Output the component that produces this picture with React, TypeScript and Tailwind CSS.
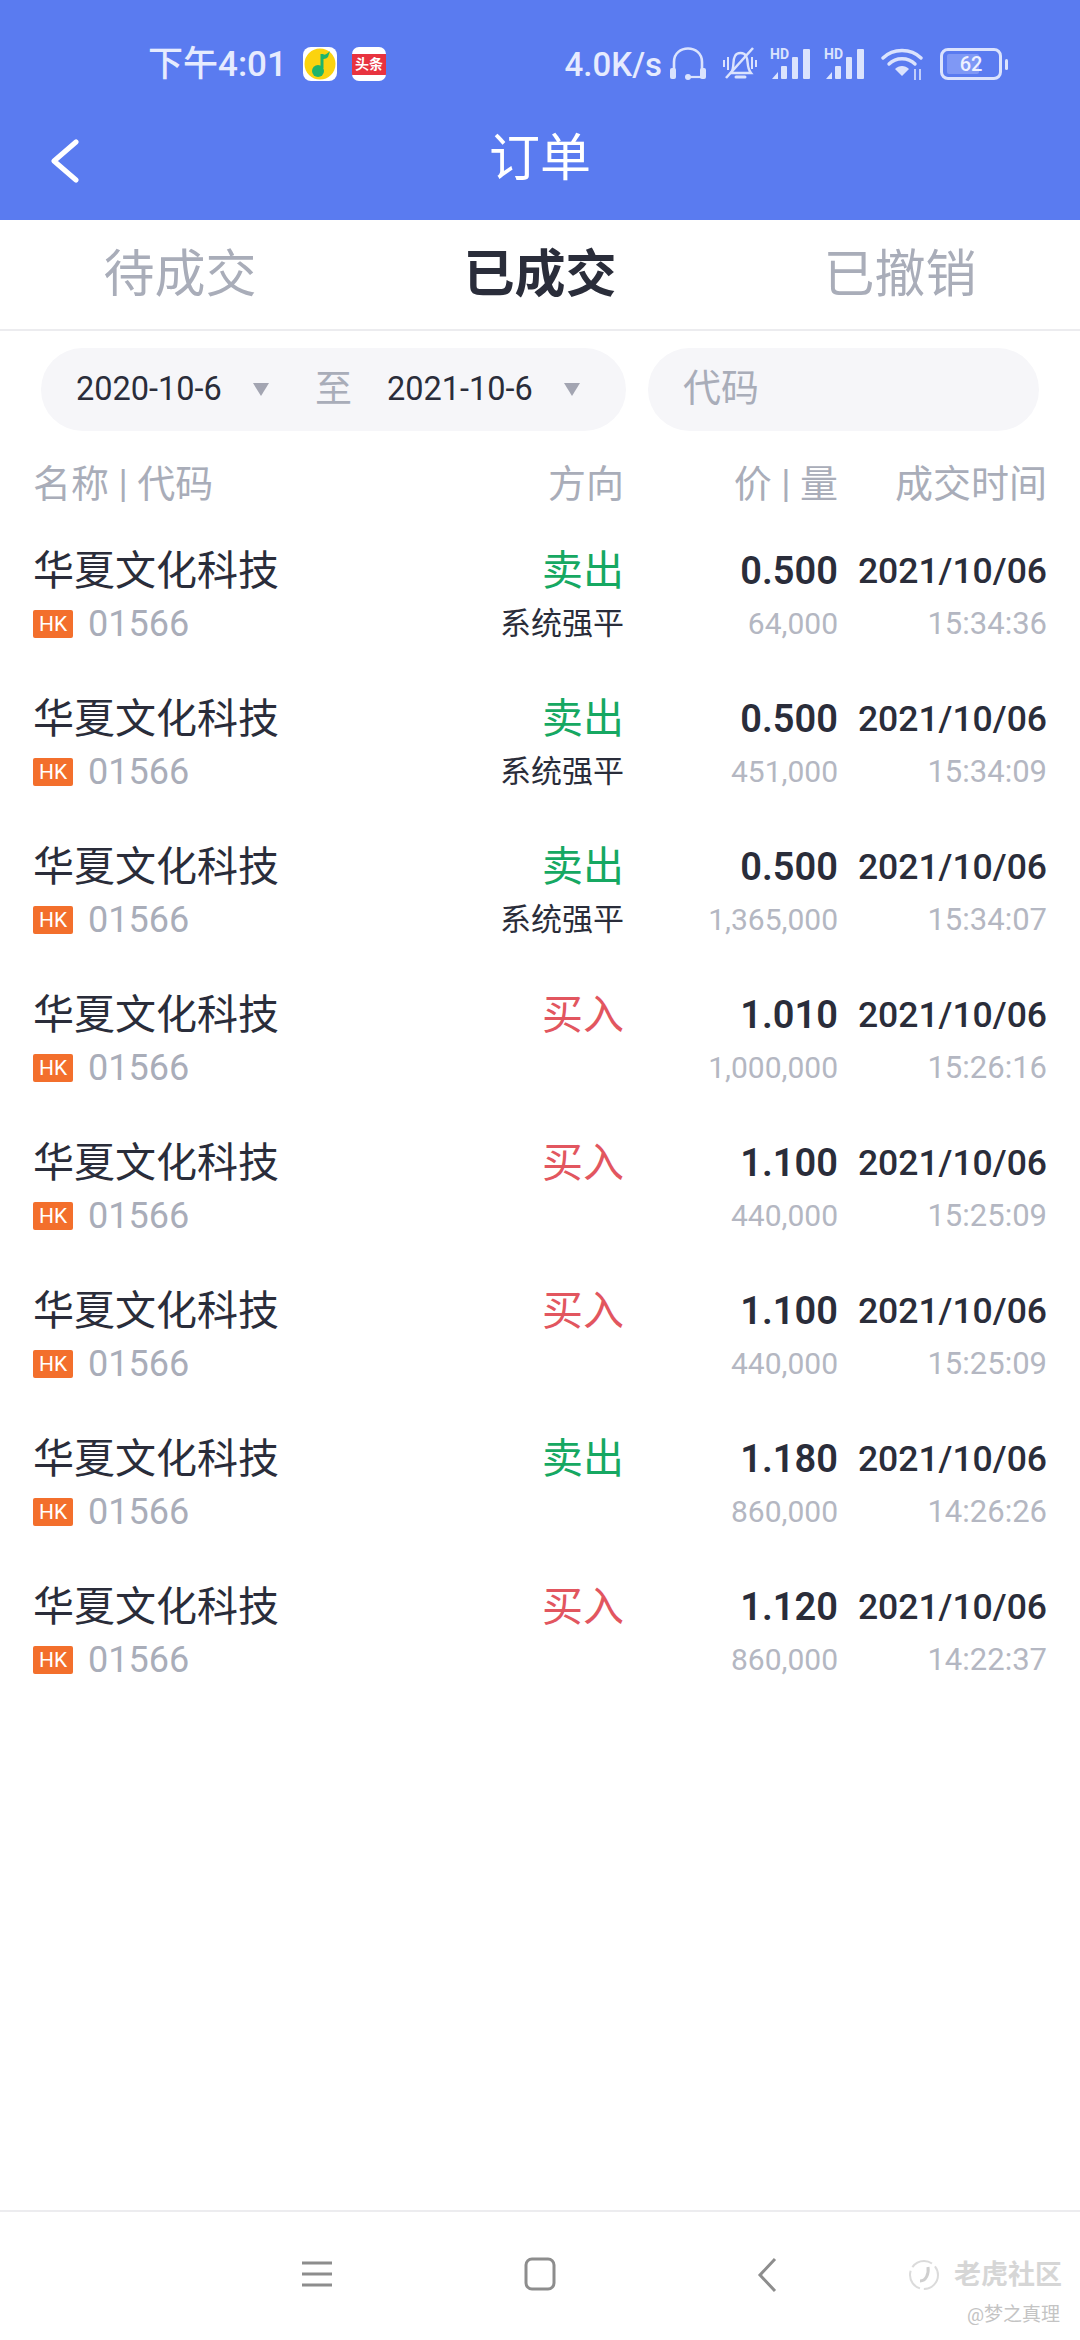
const CJK = "font-['Roboto','Noto_Sans_CJK_SC',sans-serif]";

type Order = {
  side: "卖出" | "买入";
  note?: string;
  price: string;
  qty: string;
  time: string;
};

const orders: Order[] = [
  { side: "卖出", note: "系统强平", price: "0.500", qty: "64,000", time: "15:34:36" },
  { side: "卖出", note: "系统强平", price: "0.500", qty: "451,000", time: "15:34:09" },
  { side: "卖出", note: "系统强平", price: "0.500", qty: "1,365,000", time: "15:34:07" },
  { side: "买入", price: "1.010", qty: "1,000,000", time: "15:26:16" },
  { side: "买入", price: "1.100", qty: "440,000", time: "15:25:09" },
  { side: "买入", price: "1.100", qty: "440,000", time: "15:25:09" },
  { side: "卖出", price: "1.180", qty: "860,000", time: "14:26:26" },
  { side: "买入", price: "1.120", qty: "860,000", time: "14:22:37" },
];

function AppIcons() {
  return (
    <div className="flex items-center gap-[15px]">
      <svg width="34" height="34" viewBox="0 0 34 34">
        <rect width="34" height="34" rx="8" fill="#fff" />
        <circle cx="17" cy="17" r="15.5" fill="#fbd30f" />
        <path d="M19 7 L19 21" stroke="#1fb46a" strokeWidth="3" />
        <path d="M19 7 C21 9 24 7 27 4 L25 10 C23 12 21 12 19 12Z" fill="#1fb46a" />
        <circle cx="15" cy="24" r="6" fill="#1fb46a" />
      </svg>
      <div className="flex h-[34px] w-[34px] flex-col justify-center overflow-hidden rounded-[7px] bg-white">
        <div className="flex h-[21px] items-center justify-center bg-[#e8333f] text-[14px] leading-none font-bold whitespace-nowrap text-white">
          头条
        </div>
      </div>
    </div>
  );
}

function StatusIcons() {
  const c = "#dbe3fd";
  return (
    <div className="flex items-center">
      <svg width="36" height="34" viewBox="0 0 36 34" fill="none" className="ml-[8px]">
        <path d="M4 24 V15 C4 -3 32 -3 32 15 V24" stroke={c} strokeWidth="2.6" />
        <rect x="0" y="21" width="6" height="11" rx="2" fill={c} />
        <rect x="30" y="21" width="6" height="11" rx="2" fill={c} />
        <path d="M18 30 H31" stroke={c} strokeWidth="2.2" />
        <circle cx="18" cy="30" r="3" fill={c} />
      </svg>
      <svg width="36" height="34" viewBox="0 0 36 34" fill="none" className="ml-[16px]">
        <path d="M9 26 C13 20 10 14 13 9 C15 5 22 5 24 9 C27 14 24 20 29 26 Z" stroke={c} strokeWidth="2.4" />
        <path d="M14 30 H23" stroke={c} strokeWidth="3" strokeLinecap="round" />
        <path d="M2 13 V20 M6 10 V23 M30 10 V22 M34 13 V20" stroke={c} strokeWidth="2" />
        <path d="M4 31 L31 1" stroke={c} strokeWidth="2.6" />
      </svg>
      <Signal className="ml-[12px]" />
      <Signal className="ml-[12px]" />
      <svg width="44" height="34" viewBox="0 0 44 34" fill="none" className="ml-[15px]">
        <path d="M2 11 C12 1 30 1 40 11" stroke={c} strokeWidth="3.4" strokeLinecap="round" />
        <path d="M8 17 C15 10 27 10 34 17" stroke={c} strokeWidth="3.4" strokeLinecap="round" />
        <path d="M21 29 L14 22 C18 18 24 18 28 22 Z" fill={c} />
        <path d="M34 22 V33 M39 22 V33" stroke={c} strokeWidth="1.6" />
      </svg>
      <div className="ml-[15px] flex items-center">
        <div className="relative h-[32px] w-[62px] rounded-[8px] border-[3px] border-[#dbe3fd]">
          <div className="absolute inset-y-[3px] left-[4px] w-[32px] rounded-[2px] bg-[#7f98f5]" />
          <div className="relative flex h-full items-center justify-center text-[20px] leading-none font-medium text-[#eef1ff]">
            62
          </div>
        </div>
        <div className="ml-[3px] h-[11px] w-[3px] rounded-full bg-[#dbe3fd]" />
      </div>
    </div>
  );
}

function Signal({ className }: { className: string }) {
  const c = "#dbe3fd";
  return (
    <div className={`relative h-[34px] w-[42px] ${className}`}>
      <span className="absolute top-0 left-0 text-[14px] leading-none font-bold text-[#dbe3fd]">HD</span>
      <svg width="42" height="34" viewBox="0 0 42 34" className="absolute inset-0">
        <path d="M2 32 L8 25 V32 Z" fill={c} />
        <rect x="11" y="19" width="6" height="13" rx="1" fill={c} />
        <rect x="22" y="10" width="6" height="22" rx="1" fill={c} />
        <rect x="33" y="2" width="7" height="30" rx="1" fill={c} />
      </svg>
    </div>
  );
}

function OrderRow({ order }: { order: Order }) {
  const sideColor = order.side === "卖出" ? "text-[#16a862]" : "text-[#e2565f]";
  return (
    <div className="flex h-[148px] items-start pt-[6px]">
      <div className="flex-1">
        <div className="h-[56px] text-[41px] leading-[56px] text-[#2a2d3a]">华夏文化科技</div>
        <div className="flex h-[50px] items-center">
          <div className="flex h-[28px] w-[40px] items-center justify-center rounded-[2px] bg-[#f36f2c] text-[21px] leading-none text-white">
            HK
          </div>
          <span className="ml-[15px] text-[36px] leading-none text-[#a9adb9]">01566</span>
        </div>
      </div>
      <div className="w-[200px] text-right">
        <div className={`h-[56px] text-[41px] leading-[56px] ${sideColor}`}>{order.side}</div>
        {order.note && <div className="h-[50px] text-[31px] leading-[50px] text-[#2a2d3a]">{order.note}</div>}
      </div>
      <div className="w-[214px] text-right">
        <div className="h-[56px] text-[38px] leading-[56px] font-semibold text-[#2a2d3a]">{order.price}</div>
        <div className="h-[50px] text-[30px] leading-[50px] text-[#b4b7c2]">{order.qty}</div>
      </div>
      <div className="w-[209px] text-right">
        <div className="h-[56px] text-[35.5px] leading-[56px] font-medium whitespace-nowrap text-[#2a2d3a]">2021/10/06</div>
        <div className="h-[50px] text-[31px] leading-[50px] text-[#b4b7c2]">{order.time}</div>
      </div>
    </div>
  );
}

export default function App() {
  return (
    <div className={`relative flex h-[2340px] w-[1080px] flex-col overflow-hidden bg-white ${CJK}`}>
      <header className="h-[220px] bg-[#5a7bf0]">
        <div className="flex h-[127px] items-center pr-[72px] pl-[148px] pt-[1px]">
          <span className="text-[35px] leading-none font-medium whitespace-nowrap text-[#e6ebfe]">下午4:01</span>
          <div className="ml-[16px]">
            <AppIcons />
          </div>
          <span className="ml-auto text-[33px] leading-none font-medium text-[#e6ebfe]">4.0K/s</span>
          <StatusIcons />
        </div>
        <div className="relative -mt-[4px] flex h-[70px] items-center justify-center">
          <svg width="30" height="44" viewBox="0 0 30 44" fill="none" className="absolute top-[16px] left-[50px]">
            <path d="M26 3 L4 22 L26 41" stroke="#fff" strokeWidth="5" strokeLinecap="round" strokeLinejoin="round" />
          </svg>
          <h1 className="text-[51px] leading-none text-white">订单</h1>
        </div>
      </header>

      <nav className="grid h-[111px] grid-cols-3 border-b-2 border-[#ececef] text-center text-[51px] leading-[110px] text-[#a9adb9]">
        <div>待成交</div>
        <div className="font-bold text-[#2a2d3a]">已成交</div>
        <div>已撤销</div>
      </nav>

      <div className="flex gap-[22px] pt-[17px] pl-[41px]">
        <div className="flex h-[83px] w-[585px] items-center rounded-full bg-[#f6f6f9]">
          <span className="ml-[35px] w-[146px] text-[32.5px] leading-none whitespace-nowrap text-[#2a2d3a]">2020-10-6</span>
          <div className="ml-[31px] h-0 w-0 border-x-[8px] border-t-[13px] border-x-transparent border-t-[#a3a5b2]" />
          <span className="ml-[46px] text-[37px] leading-none text-[#a9adb9]">至</span>
          <span className="ml-[35px] w-[146px] text-[32.5px] leading-none whitespace-nowrap text-[#2a2d3a]">2021-10-6</span>
          <div className="ml-[31px] h-0 w-0 border-x-[8px] border-t-[13px] border-x-transparent border-t-[#a3a5b2]" />
        </div>
        <div className="flex h-[83px] w-[391px] items-center rounded-full bg-[#f6f6f9] pb-[3px] pl-[35px] text-[38px] leading-none text-[#a9adb9]">
          代码
        </div>
      </div>

      <div className="flex h-[102px] items-center px-[33px] pt-[4px] text-[38px] leading-none text-[#a9adb9]">
        <div className="flex-1">名称 | 代码</div>
        <div className="w-[200px] text-right">方向</div>
        <div className="w-[214px] text-right">价 | 量</div>
        <div className="w-[209px] text-right">成交时间</div>
      </div>

      <main className="flex-1 px-[33px] pt-[4px]">
        {orders.map((order, i) => (
          <OrderRow key={i} order={order} />
        ))}
      </main>

      <footer className="flex h-[130px] items-start border-t-2 border-[#ececef] pt-[45px] pl-[301px]">
        <svg width="32" height="28" viewBox="0 0 32 28" fill="none" className="mt-[3px]">
          <path d="M1 3 H31 M1 14 H31 M1 25 H31" stroke="#8d8d8d" strokeWidth="3" />
        </svg>
        <svg width="32" height="34" viewBox="0 0 32 34" fill="none" className="ml-[191px]">
          <rect x="2" y="2" width="28" height="30" rx="6" stroke="#8d8d8d" strokeWidth="3" />
        </svg>
        <svg width="20" height="36" viewBox="0 0 20 36" fill="none" className="ml-[201px]">
          <path d="M18 2 L3 18 L18 34" stroke="#8d8d8d" strokeWidth="3" />
        </svg>
      </footer>

      <div className="absolute top-[2259px] left-[908px] flex items-center gap-[14px] opacity-60">
        <svg width="32" height="32" viewBox="0 0 32 32" fill="none">
          <circle cx="16" cy="16" r="14" stroke="#c4c4c4" strokeWidth="2" strokeDasharray="22 4" />
          <path d="M12 22 C18 22 21 15 20 8" stroke="#b0b0b0" strokeWidth="3" />
        </svg>
        <span className="text-[27px] leading-none font-semibold whitespace-nowrap text-[#bcbcbc]">老虎社区</span>
      </div>
      <div className="absolute top-[2305px] right-[20px] text-[19px] leading-none whitespace-nowrap text-[#c4c4c4]">
        @梦之真理
      </div>
    </div>
  );
}
